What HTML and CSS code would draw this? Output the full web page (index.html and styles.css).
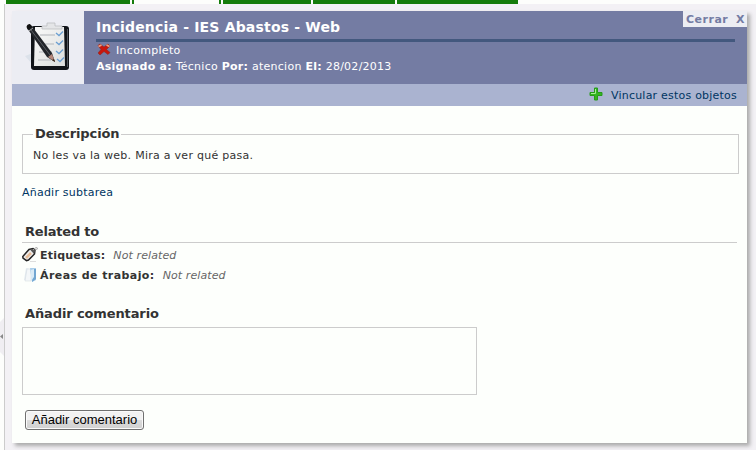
FILE: index.html
```html
<!DOCTYPE html>
<html lang="es">
<head>
<meta charset="utf-8">
<title>Incidencia - IES Abastos - Web</title>
<link rel="stylesheet" href="styles.css">
</head>
<body>
<aside class="rail"><svg class="handle" width="4" height="38" viewBox="0 0 4 38"><path d="M0 4 4 0V38L0 34Z" fill="#f0eef2"/><path d="M0 18.500 3 16v5Z" fill="#888"/></svg></aside>
<main class="page">
  <nav class="tabs"><i class="tab t1"></i><i class="tab t2 active"></i><i class="tab t3"></i><i class="tab t4"></i><i class="tab t5"></i></nav>
  <div class="workspace">
    <article class="card">
      <header class="head">
        <div class="icon">
          <svg width="46" height="48" viewBox="0 0 46 48">
            <defs><linearGradient id="paper" x2="1" y2="1"><stop stop-color="#fafafa"/><stop offset="1" stop-color="#dcdedc"/></linearGradient></defs>
            <path d="M0 34l8-3v12z" fill="#dce2ea"/>
            <rect x="6" y="4" width="38" height="44" rx="3" fill="#111418"/>
            <path d="M42.500 7v38" stroke="#50545a"/>
            <path d="M10 5h29l1 39H9z" fill="url(#paper)"/>
            <path d="M17 4h5V1h8v3h7v3H17z" fill="#e4e5e7" stroke="#b8b9bb" stroke-width=".7"/>
            <path d="M15 13h15M15 22h14M14 30h13M13 38h13" stroke="#c6c9cb" stroke-width="1.4"/>
            <path d="M31 11l3 2.500 4-4M31 20l3 2.500 4-4M31 29l3 2.500 4-4M32 37l3 2.500 4-4" fill="none" stroke="#6b9fd2" stroke-width="1.3"/>
            <path d="M2 6Q2 2 6 3l21 28 3 9-8-5Z" fill="#22252a"/>
            <path d="M6 8l19 25" stroke="#5a5d62"/>
            <path d="M1.500 5Q2 2 5 2l2 3-4 3z" fill="#111"/>
            <path d="M4 9l4-3" stroke="#aaa"/>
            <path d="M23 35l4-3 3 8z" fill="#b5877a"/><path d="M27 38l2-1 1 3z" fill="#321"/>
          </svg>
        </div>
        <div class="info">
          <h1>Incidencia - IES Abastos - Web</h1>
          <div class="status"><svg width="14" height="13" viewBox="0 0 14 13"><path d="M1 2.500 3 1l4 3 4-3 2 2-3.500 3.500 3.500 3-2 2-4-3-4 3.500-2-2 3-3.500Z" fill="#c9160c" stroke="#8c2a25" stroke-width=".6"/><path d="M1.500 3.500l3-1.500M9.500 2l3 1.500" stroke="#eba283" stroke-width="1.700"/></svg><span>Incompleto</span></div>
          <p class="meta"><b>Asignado a:</b> Técnico <b>Por:</b> atencion <b>El:</b> 28/02/2013</p>
        </div>
        <a class="close"><span>Cerrar</span><span>X</span></a>
      </header>
      <div class="linkbar">
        <svg width="14" height="14" viewBox="0 0 14 14"><path d="M5.500 1h3v4.500H13v3H8.500V13h-3V8.500H1v-3h4.500z" fill="#35b421" stroke="#259a1a"/><path d="M6.500 2v4.500H2" fill="none" stroke="#a5ef94"/></svg>
        <a>Vincular estos objetos</a>
      </div>
      <div class="body">
        <fieldset><legend>Descripción</legend><p class="desc">No les va la web. Mira a ver qué pasa.</p></fieldset>
        <a class="subtask">Añadir subtarea</a>
        <h2 class="related">Related to</h2>
        <div class="relation"><svg width="16" height="16" viewBox="0 0 16 16"><path d="M8 14.500h6" stroke="#ddd"/><path d="M.8 9.500 7 2.500 11 1.500l2 1.500-.5 4-6 6-2 .7L1 11Z" fill="#eee" stroke="#242424" stroke-width="1.500"/><path d="M8 2.500 12 2l1 2-1 3z" fill="#555"/><path d="M4 11 9 6" stroke="#e7bd99" stroke-width="2.500"/><path d="M11 3l3-2.500 1.500.5-1 2" fill="none" stroke="#aaa"/></svg><b>Etiquetas:</b><em>Not related</em></div>
        <div class="relation areas"><svg width="16" height="16" viewBox="0 0 16 16"><path d="M2 13 4 1l4 1v12z" fill="#e4ebf0"/><path d="M5 2h4v12H3z" fill="#f4f7f9" stroke="#d0d9df" stroke-width=".5"/><path d="M8 1h6v12l-4 2z" fill="#a9cde9"/><path d="M12 2h2v10l-4 3z" fill="#72a6d1"/><path d="M9 3l3-1v8l-3 4z" fill="#d8eaf6"/></svg><b>Áreas de trabajo:</b><em>Not related</em></div>
        <h2 class="comment">Añadir comentario</h2>
        <textarea></textarea>
        <button>Añadir comentario</button>
      </div>
    </article>
  </div>
</main>
</body>
</html>
```
FILE: styles.css
```css
* { box-sizing: border-box; }
body { margin: 0; height: 450px; overflow: hidden; display: flex; background: #fdfefc; color: #333; font: 11px/16px "DejaVu Sans", sans-serif; }
h1, h2, p { margin: 0; }
svg { flex: none; display: block; }
.rail { width: 4px; padding-top: 318px; }
.page { width: 752px; background: linear-gradient(90deg, #ccc 1px, #f3f1f5 1px); }
.tabs { height: 4px; display: flex; gap: 2px; padding-left: 2px; background: #fdfefc; }
.tab { background: #157c0b; }
.active { border: solid #157c0b; border-width: 0 2px; background: #fdfefc; }
.t1 { width: 124px; } .t2 { width: 89px; } .t3 { width: 88px; } .t4 { width: 82px; } .t5 { width: 121px; }
.workspace { padding: 7px 9px 0 8px; }
.card { width: 735px; height: 432px; background: #fdfffc; box-shadow: 3px 3px 4px #aaa; }
.head { height: 73px; display: flex; background: #747ca3; color: #fff; }
.icon { width: 72px; padding: 11px 0 0 13px; background: #ecedf3; }
.info { width: 639px; margin-left: 12px; padding-top: 6px; }
h1 { height: 25px; border-bottom: 3px solid #43587e; font-size: 14px; line-height: 21px; letter-spacing: .18px; margin-bottom: 1px; white-space: nowrap; }
.status { height: 14px; display: flex; gap: 5px; margin-left: 1px; line-height: 15px; letter-spacing: .3px; }
.meta { line-height: 20px; letter-spacing: .26px; white-space: nowrap; }
.close { width: 64px; height: 16px; margin-left: -52px; padding: 0 2px 0 3px; display: flex; justify-content: space-between; background: #ecedf3; color: #747ca3; font-weight: bold; line-height: 17px; letter-spacing: .5px; }
.linkbar { height: 22px; display: flex; justify-content: flex-end; gap: 8px; padding: 4px 10px 0 0; background: #aab3d0; color: #003562; line-height: 15px; letter-spacing: .22px; }
.linkbar svg { margin-top: -1px; }
.body { padding: 20px 8px 0 10px; display: flex; flex-direction: column; align-items: flex-start; }
fieldset { width: 717px; height: 48px; margin: 0; padding: 6px 10px 0; border: 1px solid #ccc; }
legend { padding: 0 2px; font-size: 13px; font-weight: bold; line-height: 16px; letter-spacing: -.1px; }
.desc { letter-spacing: .27px; }
.subtask { margin-top: 11px; color: #003562; letter-spacing: .22px; }
h2 { font-size: 13px; line-height: 20px; letter-spacing: -.12px; }
.related { width: 715px; height: 21px; margin-top: 21px; padding-left: 3px; border-bottom: 1px solid #ccc; letter-spacing: -.2px; }
.relation { height: 20px; display: flex; gap: 2px; padding-top: 4px; line-height: 17px; }
.relation b { letter-spacing: .2px; }
.areas b { letter-spacing: .42px; }
.relation em { margin-left: 6px; color: #666; letter-spacing: .1px; }
.comment { margin: 21px 0 3px 3px; }
textarea { width: 455px; height: 68px; border: 1px solid #ccc; resize: none; background: #fdfffc; }
button { width: 119px; height: 20px; margin: 15px 0 0 3px; padding: 0; border: 1px solid #707070; border-radius: 3px; box-shadow: inset 0 0 0 1px #fafafa; background: linear-gradient(#f2f2f2 50%, #dcdcdc 50%, #d0d0d0); font: 13px/16px "Liberation Sans", sans-serif; color: #000; }
```
